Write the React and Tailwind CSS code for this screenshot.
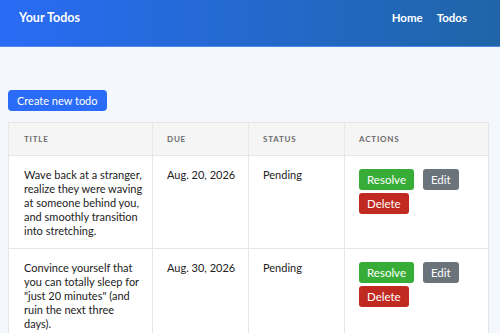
import React from "react";

const todos = [
  {
    title: "Wave back at a stranger, realize they were waving at someone behind you, and smoothly transition into stretching.",
    due: "Aug. 20, 2026",
    status: "Pending",
  },
  {
    title: 'Convince yourself that you can totally sleep for "just 20 minutes" (and ruin the next three days).',
    due: "Aug. 30, 2026",
    status: "Pending",
  },
];

const Header = () => (
  <header className="h-[47px] flex items-start justify-between pt-[8px] px-[19px] bg-gradient-to-r from-[#2a6bf5] to-[#2065a7] border-b border-[#4b8be6] text-white leading-[20px]">
    <span className="text-[12.5px] font-bold">Your Todos</span>
    <nav className="flex gap-[14px] pr-[14px] text-[11.5px] font-bold">
      <a href="#">Home</a>
      <a href="#">Todos</a>
    </nav>
  </header>
);

const TodoRow = ({ todo }) => (
  <tr className="border-t border-[#e6e6e6] align-top">
    <td className="pl-[15px] pr-[9px] pt-3 pb-[10px] border-r border-[#e6e6e6]">{todo.title}</td>
    <td className="pl-[14px] pr-[4px] pt-3 pb-[10px] border-r border-[#e6e6e6]">{todo.due}</td>
    <td className="pl-[14px] pr-[4px] pt-3 pb-[10px] border-r border-[#e6e6e6]">{todo.status}</td>
    <td className="px-[14px] pt-3 pb-[10px]">
      <div className="flex flex-wrap gap-x-[9px] gap-y-[3px] pt-[1px] text-white text-[11.5px] leading-[21px]">
        <button className="h-[21px] px-[8px] rounded-[3px] bg-[#37ad37]">Resolve</button>
        <button className="h-[21px] px-[8px] rounded-[3px] bg-[#6b737b]">Edit</button>
        <button className="h-[21px] px-[8px] rounded-[3px] bg-[#c12a20]">Delete</button>
      </div>
    </td>
  </tr>
);

export default function App() {
  return (
    <div className="min-h-[333px] bg-[#f4f7fb] text-[#222] text-[11px] leading-[14px] font-['Lato',sans-serif]">
      <Header />
      <main className="px-2 pt-[43px]">
        <button className="h-[21px] px-[9px] rounded-[4px] bg-[#2a6cf7] text-white text-[11px]">Create new todo</button>
        <table className="mt-[11px] w-[480px] table-fixed border border-[#e6e6e6] bg-white">
          <colgroup>
            <col className="w-[144px]" />
            <col className="w-[96px]" />
            <col className="w-[96px]" />
            <col className="w-[144px]" />
          </colgroup>
          <thead className="bg-[#f5f5f5]">
            <tr className="h-[33px] text-left text-[8px] tracking-[0.1em] text-[#6b6b6b]">
              <th className="px-[15px] border-r border-[#e6e6e6] font-bold">TITLE</th>
              <th className="px-[14px] border-r border-[#e6e6e6] font-bold">DUE</th>
              <th className="px-[14px] border-r border-[#e6e6e6] font-bold">STATUS</th>
              <th className="px-[14px] font-bold">ACTIONS</th>
            </tr>
          </thead>
          <tbody>
            {todos.map((t, i) => (
              <TodoRow key={i} todo={t} />
            ))}
          </tbody>
        </table>
      </main>
    </div>
  );
}
